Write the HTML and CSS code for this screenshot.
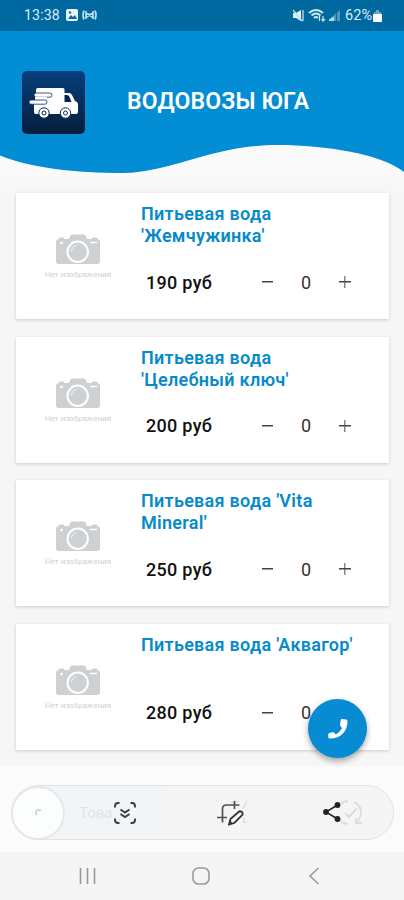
FILE: index.html
```html
<!DOCTYPE html>
<html lang="ru">
<head>
    <meta charset="UTF-8">
    <title>Водовозы Юга</title>
    <link rel="stylesheet" href="styles.css">
</head>
<body>
<svg class="defs" width="0" height="0">
    <symbol id="camera" viewBox="0 0 44 32">
        <path fill="#cdd1d4" d="M3 5V3.500h5V5h5l1-3q.5-1.500 2-1.500h12q1.500 0 2 1.500l1 3h5V3.500h5V5q3 0 3 3v19q0 3-3 3H3q-3 0-3-3V8q0-3 3-3z"/>
        <circle cx="21.700" cy="17.800" r="10.200" fill="none" stroke="#fff" stroke-width="2"/>
        <path d="M15.500 17.500a6.500 6.500 0 0 1 5-6" fill="none" stroke="#f4f5f6" stroke-width="1"/>
        <circle cx="5.500" cy="9" r="1.300" fill="#fff"/>
        <path d="M34 8.500h7" stroke="#fff" stroke-width="1.500"/>
    </symbol>
</svg>
<div id="wrapper">
    <div id="statusbar">
        <span class="time">13:38</span>
        <svg width="32" height="14" viewBox="0 0 32 14">
            <rect x="0" y="1" width="12" height="12" rx="2" fill="#e9f5fa"/>
            <path d="M2 11l3-4 2 2 2-2 2 4z" fill="#00699f"/>
            <circle cx="4" cy="4.500" r="1.200" fill="#00699f"/>
            <path d="M18 2.500q-2 4.500 0 9M29 2.500q2 4.500 0 9M20 3v8M27 3v8M20 4.500l7 5M27 4.500l-7 5" fill="none" stroke="#b9e0ec" stroke-width="1.700"/>
        </svg>
        <span class="space"></span>
        <svg width="50" height="15" viewBox="0 0 50 15">
            <path d="M0 5h3l5-3v11l-5-3H0z" fill="#e4f3f8"/>
            <path d="M0 2l9 11M10 2v11" stroke="#c4e2ed" stroke-width="1.300"/>
            <path d="M16 5q7-6 14 0M18.500 7.500q4.500-4 9 0M21 10q2-2 4 0" fill="none" stroke="#cde9f1" stroke-width="2"/>
            <path d="M26.500 13V8M30 8v5M28.500 11l1.500 2 2-2" fill="none" stroke="#cde9f1" stroke-width="1.200"/>
            <path d="M36 13v-1.500l5-3.500v5z" fill="#b5dbea"/>
            <path d="M41 13V7l2-1.500V13zM44 13V5l3-3v11z" fill="#4c9abd"/>
        </svg>
        <span class="percent">62%</span>
        <svg width="10" height="13" viewBox="0 0 10 13">
            <path d="M3 1h3v2h2v2H1V3h2z" fill="#68a9c6"/>
            <path d="M0 5h9v7q0 1-1 1H1q-1 0-1-1z" fill="#fff"/>
        </svg>
    </div>
    <div id="header">
        <div class="logo">
            <svg width="50" height="34" viewBox="0 0 50 34">
                <path d="M9 2h25q1.500 0 1.500 1.500V7H40q2 0 3 2l3 6q3 1 3 3v8q0 2-2 2H7q-2 0-2-2V17l2-7V4q0-2 2-2z" fill="#fff"/>
                <path d="M35.500 9H38q2 0 3 3l1.500 4h-7z" fill="#05264f"/>
                <g fill="#fff" stroke="#082c59">
                    <rect x="5" y="7" width="18" height="4.200" rx="2.100" stroke-width=".8"/>
                    <rect x="6" y="10.800" width="12" height="4.200" rx="1" stroke="none"/>
                    <rect x="0" y="14" width="18" height="4.200" rx="2.100" stroke-width=".8"/>
                    <circle cx="15" cy="27" r="5.200"/>
                    <circle cx="15" cy="27" r="2"/>
                    <circle cx="36.500" cy="27" r="5.200"/>
                    <circle cx="36.500" cy="27" r="2"/>
                </g>
            </svg>
        </div>
        <h1>ВОДОВОЗЫ ЮГА</h1>
    </div>
    <svg class="wave" width="404" height="34" viewBox="0 0 404 34">
        <path d="M0 0H404V32C382 14 325 5 278 5C210 5 175 32 123 33C76 33 30 28 0 15.500Z" fill="#028dd4"/>
    </svg>
    <div id="content">
        <div class="product">
            <div class="photo">
                <svg width="44" height="32"><use href="#camera"/></svg>
                <span>Нет изображения</span>
            </div>
            <div class="info">
                <div class="title">Питьевая вода 'Жемчужинка'</div>
                <div class="buy"><span class="price">190 руб</span><span class="btn minus"></span><span class="count">0</span><span class="btn plus"></span></div>
            </div>
        </div>
        <div class="product">
            <div class="photo">
                <svg width="44" height="32"><use href="#camera"/></svg>
                <span>Нет изображения</span>
            </div>
            <div class="info">
                <div class="title">Питьевая вода 'Целебный ключ'</div>
                <div class="buy"><span class="price">200 руб</span><span class="btn minus"></span><span class="count">0</span><span class="btn plus"></span></div>
            </div>
        </div>
        <div class="product">
            <div class="photo">
                <svg width="44" height="32"><use href="#camera"/></svg>
                <span>Нет изображения</span>
            </div>
            <div class="info">
                <div class="title">Питьевая вода 'Vita Mineral'</div>
                <div class="buy"><span class="price">250 руб</span><span class="btn minus"></span><span class="count">0</span><span class="btn plus"></span></div>
            </div>
        </div>
        <div class="product">
            <div class="photo">
                <svg width="44" height="32"><use href="#camera"/></svg>
                <span>Нет изображения</span>
            </div>
            <div class="info">
                <div class="title">Питьевая вода 'Аквагор'</div>
                <div class="buy"><span class="price">280 руб</span><span class="btn minus"></span><span class="count">0</span><span class="btn plus"></span></div>
            </div>
        </div>
    </div>
    <div id="call">
        <svg width="22" height="22" viewBox="0 0 22 22">
            <path d="M15 1l4 .5q1.500.2 1.500 1.700C20.500 13 14 20.500 3 20.500q-1.500 0-1.600-1.300l-.2-2.700q0-1.300 1.300-1.600l3.200-.7q1.100-.2 1.800.7l1.300 1.500q4.200-2.200 6.400-6.400L13.700 8.600q-.8-.7-.6-1.800l.6-4.500Q13.900.9 15 1z" fill="#fff"/>
        </svg>
    </div>
    <div id="toolbar">
        <div class="pill">
            <div class="thumb"><svg width="6" height="7" viewBox="0 0 6 7"><path d="M6 1H2Q1 1 1 3v2l1 1" fill="none" stroke="#a6d8d8" stroke-width="1.300"/></svg></div>
            <span class="tab">Това</span>
            <svg class="capture" width="24" height="24" viewBox="0 0 24 24" fill="none" stroke="#3c3c3c" stroke-width="1.900">
                <path d="M2 6.500V5q0-3 3-3h1.500M17.500 2H19q3 0 3 3v1.500M22 17.500V19q0 3-3 3h-1.500M6.500 22H5q-3 0-3-3v-1.500"/>
                <path d="M7.500 8.500l4.500 3 4.500-3M7.500 13l4.500 3 4.500-3"/>
            </svg>
            <svg class="crop" width="34" height="26" viewBox="0 0 34 26" fill="none">
                <path d="M14 3q4-3 8-1M30 1l-4 8M27 17v6M25 22h5" stroke="#e0e0e0" stroke-width="1.600"/>
                <path d="M0 17.500h10M5.500 22.500V9q0-4 4-4h13M17.500 1v8" stroke="#505050" stroke-width="1.700"/>
                <path d="M12 24.500l1.500-5.500 8-7q1.500-1.500 3.300 0t0 3.500l-7.500 7.500z" fill="#f5f5f5" stroke="#333" stroke-width="1.800"/>
                <path d="M12 24.500l1-4 3 3z" fill="#333"/>
            </svg>
            <svg class="share" width="44" height="28" viewBox="0 0 44 28" fill="none">
                <path d="M20 5q3-3 7-3M18 20q3 5 9 5M33 3q8 4 7 12-1 5-4 8M24 14l4 4 8-9M35 19v5h6" stroke="#dcdcdc" stroke-width="1.900"/>
                <path d="M16.500 6L5 13l11.500 7" stroke="#222" stroke-width="1.500"/>
                <circle cx="16.500" cy="6" r="2.900" fill="#222"/><circle cx="5" cy="13" r="2.900" fill="#222"/><circle cx="16.500" cy="20" r="2.900" fill="#222"/>
            </svg>
        </div>
    </div>
    <div id="navbar">
        <svg width="18" height="18" viewBox="0 0 18 18"><path d="M1.500 1v16M8.500 1v16M15.500 1v16" stroke="#999" stroke-width="1.600"/></svg>
        <svg class="home" width="18" height="18" viewBox="0 0 18 18"><rect x="1" y="1" width="16" height="16" rx="5.500" fill="none" stroke="#999" stroke-width="1.600"/></svg>
        <svg width="12" height="18" viewBox="0 0 12 18"><path d="M10.500 1L2 9l8.500 8" fill="none" stroke="#999" stroke-width="1.600"/></svg>
    </div>
</div>
</body>
</html>
```
FILE: styles.css
```css
body {
    margin: 0;
    font-family: Roboto, "Noto Sans", sans-serif;
    background-color: #f7f7f7;
}
.defs {
    position: absolute;
}
#wrapper {
    width: 404px;
    height: 900px;
    overflow: hidden;
    display: flex;
    flex-direction: column;
}
#statusbar {
    height: 31px;
    flex: none;
    box-sizing: border-box;
    padding: 0 21px 1px 24px;
    display: flex;
    align-items: center;
    background-color: #00699f;
    color: #d9eef6;
    font-size: 14px;
}
#statusbar .time {
    width: 42px;
    letter-spacing: 0.2px;
}
#statusbar .space {
    flex: 1;
}
#statusbar .percent {
    margin: 0 1px 0 2px;
    font-size: 14.5px;
}
#header {
    height: 109px;
    flex: none;
    display: flex;
    background-color: #028dd4;
}
#header .logo {
    width: 63px;
    height: 63px;
    margin: 40px 0 0 22px;
    border-radius: 5px;
    background: linear-gradient(#063f7b, #051e3d);
    display: flex;
    align-items: center;
    justify-content: center;
}
#header h1 {
    margin: 56px 0 0 42px;
    color: white;
    font-size: 23px;
    line-height: 30px;
    font-weight: 600;
    letter-spacing: 0.15px;
    white-space: nowrap;
}
.wave {
    display: block;
    flex: none;
    background-color: #fafafa;
}
#content {
    height: 592px;
    flex: none;
    box-sizing: border-box;
    padding: 19px 15px 0 16px;
    display: flex;
    flex-direction: column;
    gap: 17.5px;
    background: linear-gradient(#fafafa, #f6f6f6 20px);
}
.product {
    height: 126px;
    flex: none;
    display: flex;
    background-color: white;
    box-shadow: 0 1px 3px rgba(0, 0, 0, 0.18);
}
.product .photo {
    width: 124px;
    margin-right: 1px;
    box-sizing: border-box;
    padding-top: 41px;
    display: flex;
    flex-direction: column;
    align-items: center;
}
.product .photo span {
    margin-top: 4px;
    color: #d0d0d0;
    font-size: 8px;
    line-height: 10px;
}
.product .info {
    flex: 1;
}
.product .title {
    width: 219px;
    height: 66px;
    box-sizing: border-box;
    padding-top: 10px;
    color: #078ac9;
    font-size: 18px;
    line-height: 22px;
    font-weight: 600;
    letter-spacing: 0.28px;
}
.product .buy {
    height: 46px;
    padding-left: 5px;
    display: flex;
    align-items: center;
    font-size: 18px;
    color: #333;
}
.product .price {
    width: 115px;
    color: #111;
    font-weight: 500;
    letter-spacing: 0.3px;
}
.product .btn {
    width: 12px;
    height: 12px;
    background: linear-gradient(#444, #444) center / 11px 1.5px no-repeat;
}
.product .plus {
    background: linear-gradient(#444, #444) center / 12px 1.5px no-repeat, linear-gradient(#888, #888) center / 1.5px 12px no-repeat;
}
.product .count {
    width: 66px;
    text-align: center;
}
#call {
    position: absolute;
    left: 308px;
    top: 699px;
    width: 59px;
    height: 59px;
    border-radius: 50%;
    background-color: #078cd3;
    box-shadow: 0 3px 6px rgba(0, 0, 0, 0.35);
    display: flex;
    align-items: center;
    justify-content: center;
}
#toolbar {
    height: 86px;
    flex: none;
    box-sizing: border-box;
    padding: 19px 10px 0 11px;
    background-color: #fbfbfb;
}
#toolbar .pill {
    height: 55px;
    box-sizing: border-box;
    border: 1px solid #e2e2e2;
    border-radius: 28px;
    display: flex;
    align-items: center;
    background: linear-gradient(90deg, #f1f5f7 35%, #f5f5f5 42%);
}
#toolbar .thumb {
    width: 50px;
    height: 50px;
    border: 2px solid #e6e8e8;
    border-radius: 50%;
    margin-left: -1px;
    background-color: #fcfdfd;
    display: flex;
    align-items: center;
    justify-content: center;
}
#toolbar .tab {
    width: 34px;
    margin-left: 14px;
    color: #d9e6ec;
    font-size: 15px;
}
#toolbar .crop {
    margin-left: 80px;
}
#toolbar .share {
    margin-left: 70px;
}
#navbar {
    flex: 1;
    box-sizing: border-box;
    padding: 0 84px 0 79px;
    display: flex;
    align-items: center;
    justify-content: space-between;
    background-color: #f5f5f5;
}
#navbar .home {
    margin-right: 4px;
}
```
